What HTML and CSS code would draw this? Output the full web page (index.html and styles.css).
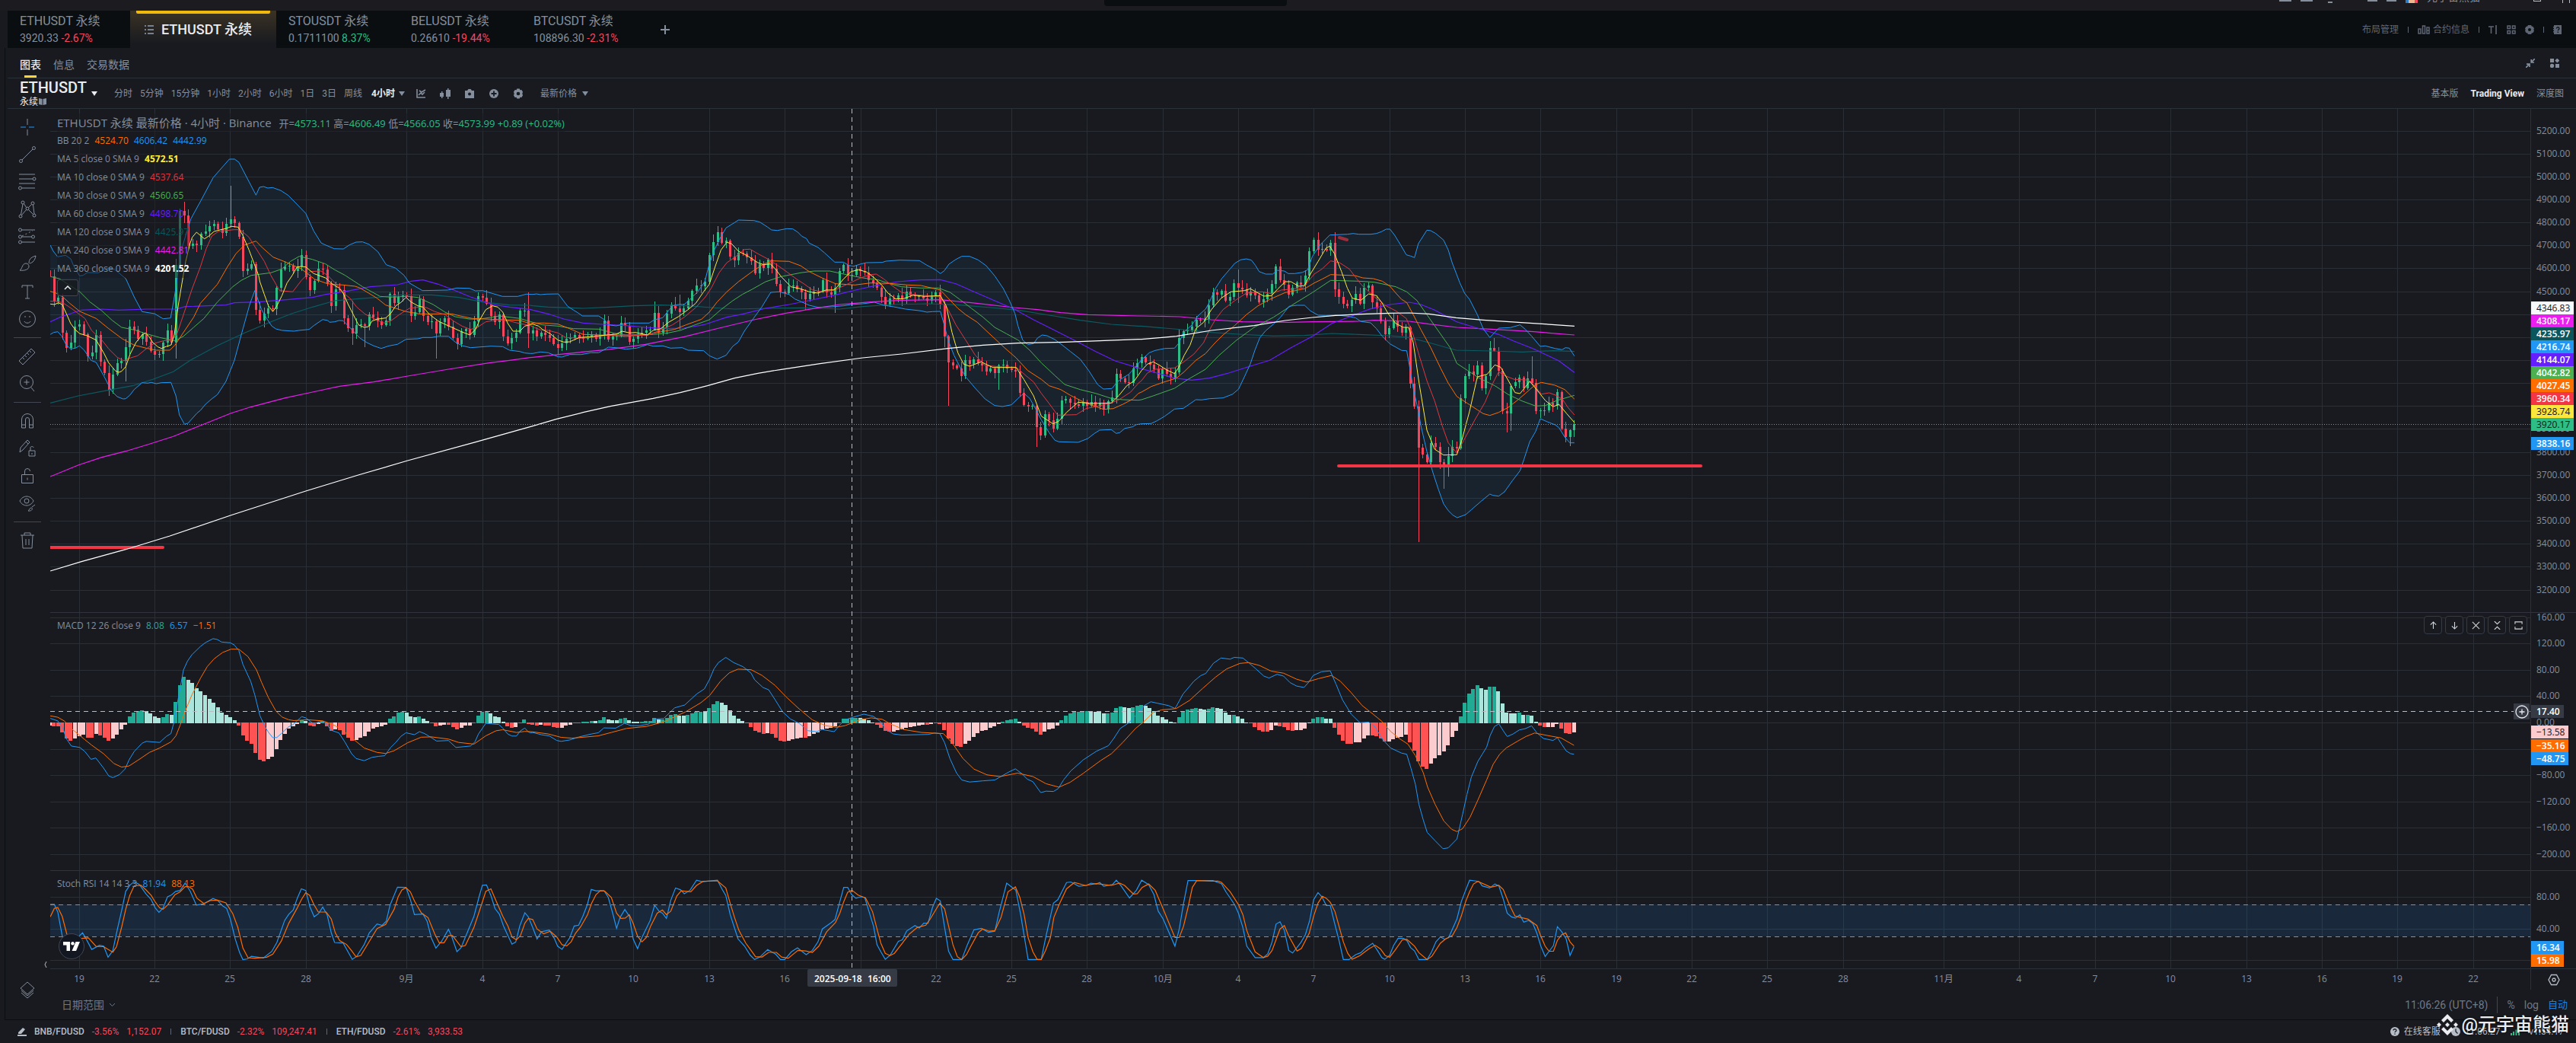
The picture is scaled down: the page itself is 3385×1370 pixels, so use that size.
FILE: index.html
```html
<!DOCTYPE html>
<html lang="zh-CN">
<head>
    <meta charset="UTF-8">
    <meta name="viewport" content="width=device-width, initial-scale=1.0">
    <title>ETHUSDT 永续</title>
    <link rel="stylesheet" href="styles.css">
</head>
<body>

    <header class="title-bar">
        <div class="title-search"><span>⌕</span><span>搜索</span></div>
        <div class="title-tools">
            <i class="stub"></i><i class="stub"></i><i class="stub round"></i>
            <i class="stub right"></i><i class="stub small"></i><i class="avatar"></i>
            <span class="user-name">元宇宙熊猫</span>
            <i class="win"></i><i class="win close"></i>
        </div>
    </header>

    <nav class="symbol-tabs">
        <a class="symbol-tab first" href="#"><span class="name">ETHUSDT 永续</span><span>3920.33 <b class="down">-2.67%</b></span></a>
        <a class="symbol-tab active" href="#">
            <svg width="14" height="14" viewBox="0 0 14 14"><path d="M1 2h2M1 7h2M1 12h2M5 2h8M5 7h8M5 12h8" stroke="#76808f" stroke-width="2"/></svg>
            <strong>ETHUSDT 永续</strong>
        </a>
        <a class="symbol-tab sto" href="#"><span class="name">STOUSDT 永续</span><span>0.1711100 <b class="up">8.37%</b></span></a>
        <a class="symbol-tab bel" href="#"><span class="name">BELUSDT 永续</span><span>0.26610 <b class="down">-19.44%</b></span></a>
        <a class="symbol-tab btc" href="#"><span class="name">BTCUSDT 永续</span><span>108896.30 <b class="down">-2.31%</b></span></a>
        <button class="add-tab" aria-label="添加"><svg width="14" height="14" viewBox="0 0 14 14"><path d="M7 1v12M1 7h12" stroke="#848e9c" stroke-width="2"/></svg></button>
        <div class="tab-tools">
            <button>布局管理</button>
            <i class="bar"></i>
            <button class="with-icon"><svg width="16" height="12" viewBox="0 0 16 12" fill="none" stroke="currentColor" stroke-width="1.5"><path d="M1 5h3v6H1zM6.500 1h3v10h-3zM12 3h3v8h-3zM12 7h3"/></svg>合约信息</button>
            <i class="bar"></i>
            <button aria-label="字体"><svg width="12" height="12" viewBox="0 0 12 12" fill="none" stroke="currentColor" stroke-width="1.600"><path d="M0 2h7M3.500 2v9M10 0v12"/></svg></button>
            <button aria-label="布局"><svg width="12" height="12" viewBox="0 0 12 12" fill="none" stroke="currentColor" stroke-width="1.500"><path d="M1 1h3.500v3.500H1zM7.500 1H11v3.500H7.500zM1 7.500h3.500V11H1zM7.500 7.500H11V11H7.500z"/></svg></button>
            <button aria-label="设置"><svg width="12" height="12" viewBox="0 0 12 12"><path fill-rule="evenodd" fill="currentColor" d="M4 0h4l.8 1.400L10.600 2 12 4.500 11.300 6 12 7.500 10.600 10l-1.800.6L8 12H4l-.8-1.400L1.400 10 0 7.500.7 6 0 4.500 1.400 2l1.800-.6zM6 4a2 2 0 1 0 0 4 2 2 0 0 0 0-4z"/></svg></button>
            <i class="bar"></i>
            <button aria-label="帮助"><svg width="12" height="12" viewBox="0 0 12 12"><path fill="currentColor" d="M1 0h10v12H1V9.500H0V8h1V6.500H0V5h1V3.500H0V2h1z"/><path d="M4.500 4.500c0-2.500 3.500-2.200 3.500 0C8 6 6.300 5.600 6.300 7.300M6.300 8.600v1.400" fill="none" stroke="#0b0e11" stroke-width="1.300"/></svg></button>
        </div>
    </nav>

    <main class="panel">
        <div class="panel-tabs">
            <button class="active">图表</button>
            <button>信息</button>
            <button>交易数据</button>
            <div class="panel-tools">
                <button aria-label="收起"><svg width="12" height="12" viewBox="0 0 12 12" fill="none" stroke="currentColor" stroke-width="1.700"><path d="M12 0 7.500 4.500M7.200 1v4H11M0 12l4.500-4.500M1 7.200h4V11"/></svg></button>
                <button aria-label="组件"><svg width="12" height="12" viewBox="0 0 12 12" fill="currentColor"><path d="M0 0h5v5H0zM7 7h5v5H7zM9.300-.4l3 3-3 3-3-3z"/><circle cx="2.500" cy="9.500" r="2.700"/></svg></button>
            </div>
        </div>

        <div class="chart-bar">
            <div class="symbol">
                <div class="symbol-name"><h1>ETHUSDT</h1><i class="caret white"></i></div>
                <div class="symbol-kind">永续<svg width="10" height="9" viewBox="0 0 10 9"><path fill="#848e9c" d="M0 0l4.500 1v8L0 8zM10 0 5.500 1v8L10 8z"/></svg></div>
            </div>
            <div class="intervals">
                <button>分时</button><button>5分钟</button><button>15分钟</button><button>1小时</button><button>2小时</button><button>6小时</button><button>1日</button><button>3日</button><button>周线</button>
                <button class="active">4小时<i class="caret"></i></button>
            </div>
            <div class="chart-tools">
                <button aria-label="指标"><svg width="14" height="14" viewBox="0 0 14 14" fill="none" stroke="currentColor" stroke-width="1.600"><path d="M2 1v11h11M4 9l3-3 2 2 3-3M5 3l3 2 5-3"/></svg></button>
                <button aria-label="K线"><svg width="14" height="14" viewBox="0 0 14 14" fill="currentColor"><path d="M0 6h2V4h1.500v2H5v5H3.500v2H2v-2H0zM8 2h2V0h1.500v2H14v9h-2.500v3H10v-3H8z"/></svg></button>
                <button aria-label="截图"><svg width="14" height="14" viewBox="0 0 14 14"><path fill="currentColor" fill-rule="evenodd" d="M1 3h3l1.500-2h3L10 3h3v10H1zM7 5.500a2 2 0 1 0 0 4 2 2 0 0 0 0-4z"/></svg></button>
                <button aria-label="添加"><svg width="14" height="14" viewBox="0 0 14 14"><circle cx="7" cy="7" r="6" fill="currentColor"/><path d="M7 3.500v7M3.500 7h7" stroke="#181a20" stroke-width="1.800"/></svg></button>
                <button aria-label="设置"><svg width="14" height="14" viewBox="0 0 12 12"><path fill-rule="evenodd" fill="currentColor" d="M4.500.5h3l.5 1.500 1.700-.3 1.500 2.300L10.500 6l.7 2-1.500 2.300L8 10l-.5 1.500h-3L4 10l-1.700.3L.8 8l.7-2L.8 4l1.500-2.300L4 2zM6 4a2 2 0 1 0 0 4 2 2 0 0 0 0-4z"/></svg></button>
                <button>最新价格<i class="caret big"></i></button>
            </div>
            <div class="views">
                <button>基本版</button><button class="active">Trading View</button><button>深度图</button>
            </div>
        </div>

        <div class="workspace">
            <aside class="draw-tools">
                <button aria-label="十字线"><svg viewBox="0 0 28 28"><path d="M14 3v8M14 17v8"/><path d="M5 14h7M16 14h7" stroke="#2196f3"/></svg></button>
                <button aria-label="趋势线"><svg viewBox="0 0 28 28"><circle cx="5.500" cy="22.500" r="2"/><circle cx="22.500" cy="5.500" r="2"/><path d="M7 21 21 7"/></svg></button>
                <button aria-label="斐波那契"><svg viewBox="0 0 28 28"><path d="M3 4h21M3 10h18M3 16h21M7 22h17"/><circle cx="23" cy="10" r="2"/><circle cx="4.500" cy="22" r="2"/></svg></button>
                <button aria-label="形态"><svg viewBox="0 0 28 28"><circle cx="5" cy="23" r="2"/><circle cx="8" cy="5" r="2"/><circle cx="21" cy="6" r="2"/><circle cx="23" cy="22" r="2"/><circle cx="14" cy="13" r="2"/><path d="M5.500 21 8 7M9.500 6.500l3 5M19.500 7.500 15.500 11.500M21.500 8l1.500 12M15.500 14.500l6 6M12.500 14.500l-6 7"/></svg></button>
                <button aria-label="预测"><svg viewBox="0 0 28 28"><path d="M6 5h18M6 14h14M6 21h18"/><path d="m7 13 14-7" stroke-dasharray="2 3"/><circle cx="4.500" cy="5" r="2"/><circle cx="4.500" cy="14" r="2"/><circle cx="21.500" cy="14" r="2"/><circle cx="4.500" cy="21" r="2"/></svg></button>
                <button aria-label="画笔"><svg viewBox="0 0 28 28"><path d="M4 22c3-1 3-9 8-9 3 0 4 2 4 4 0 4-6 6-12 5zM16 13c0-5 2-8 9-10-1 6-4 9-8 10"/></svg></button>
                <button aria-label="文字"><svg viewBox="0 0 28 28"><path d="M7 9V6h14v3M14 6v17M11 23h6"/></svg></button>
                <button aria-label="表情"><svg viewBox="0 0 28 28"><circle cx="14" cy="14" r="10.500"/><path d="M10 17c1 3 7 3 8 0M11 10v2M17 10v2"/></svg></button>
                <hr>
                <button aria-label="测量"><svg viewBox="0 0 28 28"><path d="m3 20 16-16 5 5L8 25zM8 16l2 2M11 13l2 2M14 10l2 2M17 7l2 2"/></svg></button>
                <button aria-label="放大"><svg viewBox="0 0 28 28"><circle cx="13" cy="12" r="8.500"/><path d="m19 19 4 5M13 8.500v7M9.500 12h7"/></svg></button>
                <hr>
                <button aria-label="磁铁"><svg viewBox="0 0 28 28"><path d="M6.500 23V12a7.500 7.500 0 0 1 15 0v11h-5V12a2.500 2.500 0 0 0-5 0v11zM6.500 19h5M16.500 19h5"/></svg></button>
                <button aria-label="绘图模式"><svg viewBox="0 0 28 28"><path d="m4 19 1-6L14 3l3 3-9 10zM12 5l3 3M16 17h8v7h-8zM18 17v-4c0-2 4-2 4 0M20 20v2"/></svg></button>
                <button aria-label="锁定"><svg viewBox="0 0 28 28"><path d="M6.500 12.500h15v11h-15zM10.500 12.500V8a3.500 3.500 0 0 1 7 0M14 16.500v3"/></svg></button>
                <button aria-label="隐藏"><svg viewBox="0 0 28 28"><path d="M4 11c4-8 14-8 18 0-4 8-14 8-18 0z"/><circle cx="13" cy="11" r="3"/><path d="M15 24c1 0 2-4 4-4 3 0 1 5-4 4zM20 19l4-3"/></svg></button>
                <hr>
                <button aria-label="删除"><svg viewBox="0 0 28 28"><path d="M5 7h18M10 7V4h8v3M7 7l1 17h12l1-17M12 12v8M16 12v8"/></svg></button>
                <button class="layers" aria-label="图层"><svg viewBox="0 0 28 28"><path d="m14 3 9 8-9 8-9-8zM6 14l8 7 8-7M6 17l8 7 8-7"/></svg></button>
            </aside>

            <section class="chart">
                <div class="plot">
                    <svg id="plot" class="plot-svg"></svg>

                    <div class="legend">
                        <div class="legend-title">ETHUSDT 永续 最新价格 · 4小时 · Binance <span class="ohlc">开=<b>4573.11</b> 高=<b>4606.49</b> 低=<b>4566.05</b> 收=<b>4573.99</b> <b>+0.89 (+0.02%)</b></span></div>
                        <div>BB 20 2 <b class="orange">4524.70</b> <b class="blue">4606.42</b> <b class="blue">4442.99</b></div>
                        <div>MA 5 close 0 SMA 9 <b class="yellow strong">4572.51</b></div>
                        <div>MA 10 close 0 SMA 9 <b class="red">4537.64</b></div>
                        <div>MA 30 close 0 SMA 9 <b class="green">4560.65</b></div>
                        <div>MA 60 close 0 SMA 9 <b class="purple">4498.70</b></div>
                        <div>MA 120 close 0 SMA 9 <b class="teal">4425.97</b></div>
                        <div>MA 240 close 0 SMA 9 <b class="magenta">4442.81</b></div>
                        <div>MA 360 close 0 SMA 9 <b class="white strong">4201.52</b></div>
                        <button class="collapse" aria-label="收起图例"><svg width="10" height="6" viewBox="0 0 10 6"><path d="m1 5 4-4 4 4" fill="none" stroke="#eaecef" stroke-width="1.500"/></svg></button>
                    </div>
                    <div class="legend macd">MACD 12 26 close 9 <b class="mint">8.08</b> <b class="blue">6.57</b> <b class="orange">−1.51</b></div>
                    <div class="legend stoch">Stoch RSI 14 14 3 3 <b class="blue">81.94</b> <b class="orange">88.13</b></div>

                    <div class="pane-buttons">
                        <button aria-label="上移"><svg viewBox="0 0 12 12"><path d="M6 11V1M2 5l4-4 4 4"/></svg></button>
                        <button aria-label="下移"><svg viewBox="0 0 12 12"><path d="M6 1v10M2 7l4 4 4-4"/></svg></button>
                        <button aria-label="删除"><svg viewBox="0 0 12 12"><path d="m1 1 10 10M11 1 1 11"/></svg></button>
                        <button aria-label="折叠"><svg viewBox="0 0 12 12"><path d="m2 0 4 4 4-4M2 12l4-4 4 4"/></svg></button>
                        <button aria-label="最大化"><svg viewBox="0 0 12 12"><path d="M1 4V1h10v3M1 8v3h10V8"/></svg></button>
                    </div>
                    <button class="cross-add" aria-label="添加提醒"><svg width="18" height="18" viewBox="0 0 18 18" fill="none" stroke="#eaecef" stroke-width="1.300"><circle cx="9" cy="9" r="8"/><path d="M9 5.500v7M5.500 9h7"/></svg></button>
                    <button class="side-toggle" aria-label="展开"><svg width="4" height="8" viewBox="0 0 4 8"><path d="M3 0 1 4l2 4" fill="none" stroke="#b7bdc6"/></svg></button>
                    <a class="tv-logo" href="#" aria-label="TradingView"><svg width="22" height="14" viewBox="0 0 22 14" fill="#fff"><path d="M0 1h9v12H4.500V5.500H0zM16.500 1H22l-5 12h-5.500z"/><circle cx="12.500" cy="3.300" r="2.200"/></svg></a>
                </div>
                <svg id="price-axis" class="price-axis"></svg>
                <svg id="time-axis" class="time-axis"></svg>
                <button class="axis-settings" aria-label="坐标设置"><svg width="16" height="16" viewBox="0 0 16 16" fill="none" stroke="#b7bdc6" stroke-width="1.300"><path d="M4.500 1.500h7L15 8l-3.500 6.500h-7L1 8z"/><circle cx="8" cy="8" r="2"/></svg></button>
                <div class="range-bar">
                    <button>日期范围<svg width="9" height="6" viewBox="0 0 9 6"><path d="m1 1 3.500 3.500L8 1" fill="none" stroke="currentColor"/></svg></button>
                    <div class="range-right">
                        <button>11:06:26 (UTC+8)</button><i></i><button>%</button><button>log</button><button class="auto">自动</button>
                    </div>
                </div>
            </section>
        </div>
    </main>

    <footer class="ticker">
        <svg width="12" height="12" viewBox="0 0 12 12" fill="#b7bdc6"><path d="M1 7l6-6 3 2-5 6H1zM0 10h12v2H0z"/></svg>
        <a href="#">BNB/FDUSD <b>-3.56%</b> <b>1,152.07</b></a><i></i>
        <a href="#">BTC/FDUSD <b>-2.32%</b> <b>109,247.41</b></a><i></i>
        <a href="#">ETH/FDUSD <b>-2.61%</b> <b>3,933.53</b></a>
        <div class="status">
            <svg width="12" height="12" viewBox="0 0 12 12"><circle cx="6" cy="6" r="6" fill="#b7bdc6"/><path d="M4 4.500c0-2.500 4-2.200 4 0C8 6 6 5.600 6 7.300M6 8.400v1.400" fill="none" stroke="#181a20" stroke-width="1.300"/></svg>
            <span class="help">在线客服</span>
            <svg width="12" height="12" viewBox="0 0 12 12"><circle cx="6" cy="6" r="6" fill="#b7bdc6"/><path d="M6 2.500V6l2.500 2.500" fill="none" stroke="#181a20" stroke-width="1.300"/></svg>
            <span class="clock">11:06:27</span>
            <svg width="12" height="10" viewBox="0 0 12 10" fill="#2ebd85"><path d="M0 7h2v3H0zM3 5h2v5H3zM6.500 2.500h2V10h-2zM10 0h2v10h-2z"/></svg>
            <span class="version">v1.54.17</span>
        </div>
        <div class="watermark">
            <svg width="28" height="28" viewBox="0 0 28 28" fill="#eaecef"><path d="M14 0 6 8l3 3 5-5 5 5 3-3zM3 11l3 3-3 3-3-3zM14 11l3 3-3 3-3-3zM25 11l3 3-3 3-3-3zM6 20l8 8 8-8-3-3-5 5-5-5z"/></svg>
            <span>@元宇宙熊猫</span>
        </div>
    </footer>

    <script src="chart.js"></script>
</body>
</html>
```

FILE: styles.css
```css
:root {
    --bg: #181a20;
    --dark: #0b0e11;
    --line: #2b3139;
    --muted: #848e9c;
    --dim: #5e6673;
    --text: #eaecef;
    --up: #2ebd85;
    --down: #f6465d;
    --blue: #2196f3;
    --orange: #ff6d00;
}

* {
    box-sizing: border-box;
}

body {
    display: flex;
    flex-direction: column;
    min-height: 100vh;
    margin: 0;
    background: var(--bg);
    color: var(--muted);
    font-family: Roboto, "Noto Sans CJK SC", sans-serif;
    font-size: 12px;
    line-height: 16px;
}

button {
    display: flex;
    align-items: center;
    padding: 0;
    border: none;
    background: none;
    color: inherit;
    font: inherit;
    cursor: pointer;
}

a {
    color: inherit;
    text-decoration: none;
}

b {
    font-weight: 400;
}

svg {
    flex: none;
}

.up {
    color: var(--up);
}

.down {
    color: var(--down);
}

/* window title strip */
.title-bar {
    position: relative;
    display: flex;
    justify-content: center;
    height: 14px;
    background: #1b1b20;
}

.title-search {
    display: flex;
    align-items: flex-end;
    gap: 8px;
    width: 240px;
    height: 8px;
    margin-right: 243px;
    padding: 0 12px 6px;
    overflow: hidden;
    border-radius: 0 0 4px 4px;
    background: var(--dark);
}

.title-search span {
    clip-path: inset(12px 0 0 0);
}

.title-tools {
    position: absolute;
    top: 0;
    right: 8px;
    display: flex;
    align-items: flex-end;
    gap: 12px;
    height: 4px;
    overflow: hidden;
}

.stub {
    width: 16px;
    height: 2px;
    margin-bottom: 2px;
    background: var(--muted);
}

.stub.round {
    width: 6px;
    margin: 0 34px 0 8px;
}

.stub.right,
.stub.small {
    width: 13px;
}

.avatar {
    width: 16px;
    height: 4px;
    background: linear-gradient(90deg, #2a7fc9 25%, #f0b78f 25% 75%, #f6465d 75%);
}

.user-name {
    font-size: 14px;
    line-height: 16px;
}

.win {
    width: 10px;
    height: 10px;
    margin: 0 16px 2px 58px;
    border: 1px solid #b7bdc6;
}

.win.close {
    margin: 0;
    border-width: 0 1px;
}

/* symbol tabs */
.symbol-tabs {
    display: flex;
    height: 49px;
    margin-left: 10px;
    background: var(--dark);
}

.symbol-tab {
    display: flex;
    flex-direction: column;
    justify-content: center;
    gap: 4px;
    width: 161px;
    padding-left: 16px;
    font-size: 14px;
    line-height: 18px;
    white-space: nowrap;
}

.symbol-tab .name {
    font-size: 16px;
}

.symbol-tab.active {
    flex-direction: row;
    align-items: center;
    justify-content: flex-start;
    gap: 9px;
    width: 192px;
    padding-left: 18px;
    background: linear-gradient(180deg, #3a3224, var(--bg) 90%);
    color: var(--text);
    font-size: 18px;
    position: relative;
}

.symbol-tab.active::before {
    content: "";
    position: absolute;
    top: 0;
    left: 8px;
    right: 8px;
    height: 4px;
    border-radius: 0 0 2px 2px;
    background: #f0b90b;
}

.symbol-tab.active strong {
    font-weight: 500;
}

.add-tab {
    justify-content: center;
    width: 56px;
}

.tab-tools {
    display: flex;
    align-items: center;
    gap: 12px;
    margin-left: auto;
    padding-right: 18px;
    color: var(--dim);
}

.tab-tools .with-icon svg {
    margin-right: 4px;
}

.bar {
    width: 1px;
    height: 8px;
    background: var(--dim);
}

/* panel */
.panel {
    flex: 1;
    display: flex;
    flex-direction: column;
    margin-left: 6px;
    padding-left: 3px;
    border-left: 1px solid var(--dark);
    border-bottom: 1px solid var(--dark);
}

.panel-tabs {
    display: flex;
    gap: 16px;
    height: 40px;
    padding: 0 22px 0 16px;
    border-bottom: 1px solid var(--line);
    font-size: 14px;
}

.panel-tabs > button {
    position: relative;
    padding-top: 4px;
}

.panel-tabs .active {
    color: var(--text);
    font-weight: 500;
}

.panel-tabs > .active::after {
    content: "";
    position: absolute;
    bottom: 0;
    left: 6px;
    width: 16px;
    height: 3px;
    background: #fcd535;
}

.panel-tools {
    display: flex;
    gap: 20px;
    margin-left: auto;
}

.chart-bar {
    display: flex;
    align-items: center;
    height: 40px;
    padding: 0 16px;
    border-bottom: 1px solid var(--line);
}

.symbol {
    width: 124px;
    color: var(--text);
}

.symbol-name {
    display: flex;
    align-items: flex-end;
    gap: 6px;
}

.symbol-name h1 {
    margin: 0;
    font-size: 20px;
    line-height: 22px;
    font-weight: 500;
}

.symbol-kind {
    display: flex;
    align-items: center;
    gap: 1px;
}

.caret {
    border: 4px solid transparent;
    border-top: 6px solid var(--muted);
    border-bottom: 0;
    margin-left: 5px;
}

.caret.white {
    margin: 0;
    border-top-color: var(--text);
}

.caret.big {
    margin-left: 7px;
}

.intervals,
.chart-tools,
.views {
    display: flex;
    align-items: center;
    gap: 10px;
}

.intervals .active,
.views .active {
    color: var(--text);
    font-weight: 700;
}

.intervals .active {
    margin-left: 2px;
}

.chart-tools {
    gap: 18px;
    margin-left: 14px;
}

.chart-tools button:last-child {
    margin-left: 4px;
}

.views {
    gap: 16px;
    margin-left: auto;
}

/* drawing tools */
.workspace {
    flex: 1;
    display: flex;
}

.draw-tools {
    display: flex;
    flex-direction: column;
    align-items: center;
    width: 56px;
    padding: 6px 4px 20px 0;
}

.draw-tools button {
    height: 36px;
}

.draw-tools svg {
    width: 28px;
    height: 28px;
    fill: none;
    stroke: var(--muted);
}

.draw-tools hr {
    width: 36px;
    margin: 6px 0;
    border: none;
    border-top: 1px solid #434651;
}

.draw-tools .layers {
    margin-top: auto;
}

/* chart */
.chart {
    flex: 1;
    display: grid;
    grid-template-columns: minmax(0, 1fr) 60px;
    grid-template-rows: 1130px 27px 1fr;
}

.plot {
    position: relative;
    border-bottom: 1px solid var(--line);
}

.plot-svg {
    display: block;
    width: 100%;
    height: 100%;
}

.price-axis {
    width: 60px;
    height: 1130px;
    border-left: 1px solid var(--line);
    border-bottom: 1px solid var(--line);
}

.time-axis {
    width: 100%;
    height: 27px;
}

svg text,
.legend {
    font-family: "Open Sans", "Noto Sans CJK SC", sans-serif;
    font-size: 12px;
}

.axis-text {
    fill: var(--muted);
}

.axis-settings {
    justify-content: center;
    border-left: 1px solid var(--line);
}

.legend {
    position: absolute;
    top: 6px;
    left: 9px;
    line-height: 24px;
    white-space: nowrap;
}

.legend > div {
    width: max-content;
    height: 24px;
    background: rgba(24, 26, 32, 0.5);
}

.legend b {
    margin-left: 4px;
}

.legend .legend-title {
    font-size: 15px;
}

.ohlc {
    margin-left: 6px;
    font-size: 13px;
}

.ohlc b {
    margin: 0;
    color: var(--up);
}

.legend .strong {
    font-weight: 700;
}

.orange {
    color: var(--orange);
}

.blue {
    color: var(--blue);
}

.yellow {
    color: #ffeb3b;
}

.red {
    color: #e0363f;
}

.green {
    color: #4caf50;
}

.purple {
    color: #651fff;
}

.teal {
    color: #0b565c;
}

.magenta {
    color: #e91eef;
}

.white {
    color: #fff;
}

.mint {
    color: #22ab94;
}

.legend.macd {
    top: 667px;
}

.legend.stoch {
    top: 1006px;
}

.collapse {
    justify-content: center;
    width: 28px;
    height: 22px;
    margin-top: 2px;
    border: 1px solid #434651;
    border-radius: 3px;
    background: rgba(24, 26, 32, 0.8);
}

.pane-buttons {
    position: absolute;
    top: 666px;
    right: 4px;
    display: flex;
    gap: 4px;
}

.pane-buttons button {
    justify-content: center;
    width: 24px;
    height: 24px;
    border: 1px solid #363a45;
    border-radius: 4px;
    background: var(--bg);
}

.pane-buttons svg {
    width: 11px;
    height: 11px;
    fill: none;
    stroke: #d1d4dc;
    stroke-width: 1.2;
}

.cross-add {
    position: absolute;
    top: 781px;
    right: 1px;
    justify-content: center;
    width: 21px;
    height: 21px;
    background: #363a45;
}

.side-toggle {
    position: absolute;
    left: -8px;
    bottom: 1px;
}

.tv-logo {
    position: absolute;
    left: 11px;
    bottom: 12px;
    display: flex;
    align-items: center;
    justify-content: center;
    width: 34px;
    height: 34px;
    border: 1px solid #434651;
    border-radius: 50%;
    background: #131722;
}

.range-bar {
    grid-column: 1 / -1;
    display: flex;
    align-items: center;
    justify-content: space-between;
    padding: 0 11px 0 15px;
    color: #6f7885;
    font-size: 14px;
}

.range-bar button {
    gap: 6px;
}

.range-right {
    display: flex;
    align-items: center;
    gap: 12px;
}

.range-right i {
    width: 1px;
    height: 22px;
    background: #434651;
}

.range-right .auto {
    color: #1e80e0;
    font-size: 13px;
}

/* footer */
.ticker {
    position: relative;
    display: flex;
    align-items: center;
    height: 30px;
    padding: 0 16px 0 23px;
    color: #b7bdc6;
}

.ticker > svg {
    margin-right: 10px;
}

.ticker > a {
    font-weight: 500;
    white-space: nowrap;
}

.ticker > a b {
    margin-left: 7px;
    color: var(--down);
    font-weight: 400;
}

.ticker > i {
    width: 1px;
    height: 8px;
    margin: 0 12px;
    background: var(--dim);
}

.status {
    display: flex;
    align-items: center;
    gap: 6px;
    margin-left: auto;
}

.status .help,
.status .clock {
    margin-right: 8px;
}

.version {
    margin-left: 6px;
}

.watermark {
    position: absolute;
    right: 9px;
    bottom: 8px;
    display: flex;
    align-items: center;
    gap: 4px;
    color: var(--text);
    font-size: 24px;
    line-height: 32px;
    font-weight: 500;
    text-shadow: 0 0 3px #000;
}
```

FILE: chart.js
```js
const NS = 'http://www.w3.org/2000/svg';

// where the plot sits on the page, and the bar spacing
const LEFT = 66, TOP = 143, BAR = 5.517, FIRST = -7;
const barX = k => 104 + k * BAR;
const priceY = p => 171.5 + (5200 - p) * 0.3015;
const macdY = v => 949 - v * 0.865;
const stochY = v => 1261 - v * 1.035;

const COLORS = {
    up: '#2ebd85', down: '#f6465d', grid: '#2a2f36', blue: '#2196f3', orange: '#ff6d00',
    yellow: '#ffeb3b', red: '#e0363f', green: '#4caf50', purple: '#651fff', teal: '#0b5c62', magenta: '#e91eef'
};

// sample blocks: origin x, origin y, units per pixel x, units per pixel y
const BLOCKS = {
    A: [0, 0, 1.742, 3],
    B: [0, 350, 2.24, 3],
    C: [700, 250, 1.96, 3],
    D: [1500, 250, 1.96, 3],
    E: [0, 800, 2.24, 2.751],
    F: [700, 780, 1.742, 2.658],
    G: [1500, 780, 1.742, 2.658]
};

const SERIES = {
    upper: [
        'A', '115,966 122,990 132,1012 150,1006 162,1020 168,1045 182,1087 190,1085 200,1074 225,1075 240,1062 250,1055 262,1062 272,1075 288,1098',
        'B', '395,120 418,178 455,186 480,206 502,203 512,130',
        'A', '403,1130 414,990 437,862 460,790 488,700 525,627 537,627 547,640 586,769 594,738 603,735 613,741 624,739 643,751 660,770 700,841 718,910 735,957 742,963 765,980 786,981 800,965 815,954 830,953 845,963 865,992 884,1043 905,1056 925,1085 937,1115 967,1145 1025,1143 1045,1135 1075,1136 1088,1146 1105,1145 1150,1168 1185,1168 1205,1159',
        'C', '0,410 10,408 20,411 35,409 66,408 90,457 105,472 117,483 128,495 170,495 185,510 195,530 215,534 245,523 300,523 312,511 335,502 345,483 360,455 378,449 390,450 405,430 425,400 443,360 455,290 468,235 480,195 498,148 520,127 530,117 570,119 585,125 605,145 615,156 630,158 655,151 670,152 683,165 693,181 705,190 712,208 735,225 752,247 778,283 800,283 815,296 827,299 845,290 860,285 900,284 910,279 945,275 996,277 1015,295 1030,307 1040,316 1050,328 1060,317 1072,291 1090,272 1105,260 1125,260 1147,274 1168,297 1190,337 1212,387 1228,435 1242,485 1250,535 1262,590 1275,608 1290,604 1300,582 1312,570 1325,573 1345,588 1360,605 1385,635 1410,665 1432,710 1455,765 1470,783 1492,781 1505,755 1520,739 1535,725 1547,705',
        'D', '0,668 20,640 35,631 60,623 85,622 97,600 108,560 130,530 145,495 165,468 175,440 190,388 207,347 228,310 240,288 255,274 270,270 283,275 293,295 303,320 320,330 338,330 350,315 368,318 378,328 395,328 415,323 428,313 440,260 460,215 485,176 530,173 545,170 560,173 590,173 605,170 618,163 630,153 640,153 652,177 668,217 682,254 693,259 703,265 713,210 735,157 745,159 758,170 778,196 790,235 800,285 820,365 832,405 845,430 865,490 880,545 897,580 920,543 950,541 975,530 988,547 1005,575 1027,615 1040,613 1065,623 1083,628 1092,620 1102,622 1115,653'
    ],
    lower: [
        'B', '148,268 158,260 170,257 182,275 195,310 208,325 222,322 234,313 248,330 268,370 283,378 305,430 328,490 345,513 362,522 370,521 382,508 395,485 418,458 435,460 445,457 460,462 475,458 503,457 518,510 528,585 543,622 553,618 580,578 590,567 605,543 625,520 640,505 665,453 678,410 690,370 712,260 735,150 750,95 770,170 785,205 800,235 812,246 830,252 865,255 880,252 910,248 925,232 950,209 965,213 970,220 985,218 998,213 1010,214 1035,248 1060,283 1080,300 1100,313 1122,323 1145,313 1170,307 1195,287 1230,285 1245,280 1270,280 1290,275 1320,275 1340,298 1360,312 1385,320 1445,314 1480,316 1500,330 1530,335 1545,341 1560,343',
        'C', '0,643 20,637 40,640 65,656 75,657 95,647 125,647 150,640 170,640 195,618 215,620 240,626 268,622 295,608 310,614 335,613 355,622 385,620 400,630 440,632 455,652 475,665 498,650 515,615 530,597 545,555 565,512 590,460 613,402 635,400 660,410 675,428 693,440 712,453 735,461 770,459 800,455 820,450 850,447 880,441 905,453 930,459 960,468 1000,475 1015,480 1030,478 1050,477 1060,530 1070,590 1085,650 1100,695 1115,735 1140,780 1165,822 1190,848 1210,852 1233,845 1250,820 1265,800 1280,820 1295,860 1310,905 1330,955 1345,985 1355,991 1405,993 1430,978 1445,960 1460,945 1490,943 1503,958 1512,955 1525,938 1545,932 1555,923',
        'D', '0,920 25,919 40,908 60,890 85,862 108,859 140,825 155,826 175,821 210,818 235,803 250,783 265,735 280,685 292,630 305,580 320,553 340,527 358,500 380,457 400,453 420,453 435,475 455,492 475,493 500,491 535,497 552,503 565,517 590,522 605,545 620,575 640,605 655,618 670,631 683,632 690,690 700,780 713,870 720,930 735,1030 750,1110 765,1180 778,1235 790,1262 802,1280 813,1290 835,1278 850,1258 875,1225 897,1197 905,1202 920,1205 935,1188 955,1145 975,1105 985,1060 1000,990 1015,950 1027,900 1045,912 1065,924 1075,935 1090,972 1103,995 1115,995'
    ],
    ma360: [
        'B', '148,1200 240,1163 370,1115 500,1062 680,980 900,885 1060,820 1200,765 1400,692 1560,632',
        'C', '0,929 60,902 130,875 200,851 310,820 380,797 450,770 520,740 580,721 640,706 740,683 850,660 950,645 1070,623 1160,610 1250,602 1370,598 1460,593 1560,587',
        'D', '0,587 90,575 180,552 290,533 370,513 440,501 500,493 580,487 640,484 690,483 740,487 810,502 880,511 1000,523 1115,535'
    ],
    ma240: [
        'B', '148,828 230,783 300,752 370,728 440,700 510,670 580,632 680,578 740,553 840,518 920,495 1000,472 1100,455 1200,432 1320,405 1440,380 1500,370 1560,359',
        'C', '0,658 90,643 190,628 290,607 390,577 480,543 570,510 650,485 720,467 790,450 870,440 950,433 1050,431 1130,443 1240,462 1300,470 1360,482 1430,490 1560,495',
        'D', '0,495 100,498 180,510 260,518 380,520 440,518 560,516 600,512 690,516 740,527 812,540 900,547 1010,557 1115,570'
    ],
    ma120: [
        'B', '148,538 230,510 320,487 390,470 450,445 510,415 560,370 640,312 720,262 800,217 860,185 920,160 985,135 1050,128 1110,122 1180,112 1270,112 1350,122 1420,140 1500,152 1560,153',
        'C', '0,455 40,460 130,465 200,460 260,455 330,452 400,455 460,462 520,468 600,465 700,463 790,468 850,458 930,450 1020,447 1100,452 1180,462 1250,472 1330,492 1410,512 1490,528 1560,535',
        'D', '0,535 60,543 130,552 180,560 250,567 340,574 420,572 490,564 560,568 640,573 690,580 740,600 810,630 900,633 980,637 1060,632 1115,635'
    ],
    ma60: [
        'B', '148,218 180,198 240,172 300,168 350,172 430,168 520,168 545,158 665,152 690,143 760,140 850,130 920,122 960,110 1010,100 1090,80 1170,72 1210,58 1245,53 1290,70 1330,90 1385,120 1450,150 1500,160 1560,169',
        'C', '0,472 40,487 80,507 130,523 180,528 240,533 290,540 340,545 390,543 440,530 500,500 540,488 600,465 660,450 720,432 780,412 840,390 890,373 940,360 1000,353 1050,352 1090,368 1130,395 1190,435 1240,468 1290,510 1340,548 1400,595 1450,635 1500,672 1560,700',
        'D', '0,703 40,720 85,740 130,748 175,740 220,722 280,693 330,670 385,620 440,575 490,525 550,490 590,467 640,450 690,441 720,450 755,472 812,518 870,545 920,568 960,595 1010,625 1075,672 1115,718'
    ],
    ma30: [
        'B', '148,40 175,48 235,100 265,140 300,175 330,212 358,240 395,250 430,265 470,280 515,293 540,275 570,240 600,205 640,140 685,80 710,55',
        'A', '575,1085 620,1075 645,1060 665,1030 685,1010 715,1022 745,1040 765,1062 790,1085 830,1130 870,1168',
        'B', '1150,121 1200,118 1230,122 1275,150 1310,180 1340,198 1380,207 1410,208 1470,195 1530,205 1560,217',
        'C', '0,520 25,530 65,535 105,545 170,547 210,563 240,570 310,568 345,563 380,552 415,532 455,510 485,470 515,435 540,410 565,390 600,360 640,340 690,325 725,318 765,318 810,333 850,345 890,353 920,368 950,380 1000,385 1045,385 1075,402 1100,430 1130,465 1160,500 1190,540 1220,565 1250,590 1280,630 1310,680 1345,730 1370,765 1410,785 1450,800 1490,820 1520,825 1560,827',
        'D', '0,825 30,810 85,780 120,745 165,705 200,650 245,590 290,540 340,500 390,450 440,403 487,355 560,358 600,362 655,380 683,400 710,435 735,490 765,555 795,620 812,682 840,710 870,740 910,770 945,805 980,830 1015,850 1040,848 1070,828 1115,808'
    ],
    basis: [
        'B', '148,98 165,105 185,120 205,145 235,177 283,205 320,245 360,285 395,310 430,322 460,330 500,330 515,310 545,250 570,200 590,145 640,70',
        'A', '521,1050 540,1000 560,965 586,950 600,975 625,1013 650,1030 690,1060 720,1100 750,1118 775,1122',
        'B', '1010,73 1045,78 1060,85 1085,105 1110,125 1135,152 1165,165 1195,178 1235,187 1330,187 1355,195 1390,205 1480,210 1530,212 1560,225',
        'C', '0,523 30,523 65,527 95,545 130,568 175,570 240,575 290,570 320,560 365,548 395,530 435,508 455,480 475,440 500,400 530,360 570,315 595,290 620,278 660,280 690,297 712,320 745,345 780,368 830,373 870,365 920,367 965,373 1000,375 1050,393 1070,425 1095,465 1115,490 1145,520 1180,570 1215,620 1245,660 1275,710 1310,745 1330,770 1360,785 1385,808 1420,835 1450,852 1470,863 1495,860 1520,843 1545,823 1560,800',
        'D', '0,795 25,773 55,757 90,740 110,715 140,670 165,643 190,600 210,570 240,533 270,490 300,455 330,430 370,403 420,388 445,365 465,350 487,332 550,336 570,345 597,348 620,358 640,378 655,405 670,430 683,442 700,490 720,550 745,620 770,700 790,760 812,812 840,840 865,865 880,880 897,887 920,875 945,855 970,825 1000,785 1015,765 1030,757 1065,768 1090,785 1115,823'
    ],
    ma10: [
        'B', '148,137 165,137 185,143 210,165 235,190 250,205 270,253 300,290 320,325 345,358 365,372 380,362 405,352 430,325 455,303 480,293 505,290 520,270 540,190 565,90',
        'A', '459,1050 472,980 485,930 500,912 535,905 550,905 570,935 590,990 605,1030 620,1085 640,1145 670,1150 690,1105 710,1070 735,1068 750,1085 770,1120 790,1160',
        'B', '1030,125 1050,160 1075,188 1100,205 1130,223 1150,215 1175,190 1205,165 1235,160 1255,162 1280,178 1310,190 1335,215 1360,235 1385,248 1405,240 1430,218 1465,210 1500,215 1530,225 1560,232',
        'C', '0,538 20,550 40,552 65,562 85,580 120,583 150,580 200,570 240,570 295,572 330,550 360,530 390,500 420,462 445,420 460,385 480,325 500,285 520,265 545,233 560,232 580,250 605,270 630,295 655,322 680,350 700,370 720,392 745,400 778,393 810,370 845,345 870,332 885,330 905,350 925,375 950,402 975,410 1000,413 1050,420 1070,470 1090,530 1115,590 1140,650 1165,690 1200,695 1245,697 1270,730 1290,755 1310,800 1330,840 1352,886 1400,884 1425,860 1450,852 1490,838 1510,825 1540,795 1560,760',
        'D', '0,750 15,720 35,705 85,700 110,675 135,645 160,600 175,550 190,510 210,470 240,435 270,405 310,400 335,407 360,393 395,388 415,385 445,330 465,310 487,278 510,285 535,310 565,370 600,420 630,455 655,475 682,505 700,570 715,650 735,750 755,830 775,930 790,995 812,1035 830,985 860,900 885,835 905,760 920,715 935,730 960,745 998,748 1015,775 1030,803 1050,798 1068,808 1085,825 1098,855 1115,885'
    ],
    ma5: [
        'B', '148,148 160,150 172,143 183,150 195,185 208,225 222,250 235,265 255,272 283,290 305,340 320,380 340,412 350,417 358,413 370,395 383,345 400,300 418,270 428,262 438,275 450,300 465,317 475,323 490,315 503,310 513,270 525,150 540,30',
        'A', '425,1030 435,960 440,935 450,915 460,930 468,941 478,930 490,912 505,905 518,900 530,892 545,895 555,925 570,985 582,1040 592,1085',
        'B', '765,60 778,110 790,155 803,178 815,155 830,115 845,65',
        'A', '669,1085 680,1052 690,1050 700,1052 718,1078 745,1095 760,1118',
        'B', '985,75 998,85 1010,105 1025,150 1040,190 1055,230 1072,240 1085,237 1095,215 1110,208 1135,203 1150,185 1165,155 1180,142 1195,122 1210,140 1230,155 1245,160 1265,190 1290,215 1310,228 1330,240 1360,258 1383,270 1400,248 1412,210 1430,170 1450,155 1465,160 1480,180 1495,225 1510,255 1530,255 1545,235 1560,230',
        'C', '0,527 15,535 25,548 45,565 65,590 80,598 95,597 120,580 150,577 190,570 215,567 230,555 250,562 265,560 295,570 310,552 330,545 350,520 375,498 400,470 420,445 440,400 455,370 470,300 485,235 500,205 512,210 530,240 555,260 580,285 595,293 612,290 625,310 640,340 665,380 690,388 712,400 735,405 755,393 778,392 800,350 820,320 840,313 860,322 880,345 900,375 915,405 935,428 955,427 980,413 1010,418 1050,415 1065,455 1080,560 1095,640 1110,685 1125,693 1155,676 1185,698 1245,698 1265,745 1290,810 1310,890 1340,920 1355,910 1375,875 1405,835 1440,840 1490,838 1510,808 1530,770 1550,750',
        'D', '0,710 15,685 30,676 45,688 65,708 85,722 95,700 110,650 125,610 140,545 160,520 180,470 205,425 230,400 265,395 280,388 295,400 315,417 335,415 350,390 370,360 385,360 405,378 420,375 435,330 455,280 475,228 485,220 497,250 515,320 530,385 543,425 565,433 585,408 605,415 618,440 635,485 655,525 675,540 688,540 700,600 715,760 735,945 755,1020 778,1043 812,1042 825,985 845,870 865,735 890,725 910,688 925,697 945,750 962,797 975,801 1000,753 1015,780 1040,828 1060,853 1075,843 1095,880 1115,915'
    ],
    macd: [
        'E', '148,395 170,404 185,430 195,468 210,495 235,500 250,515 268,543 282,538 305,575 320,603 332,609 352,598 368,578 380,545 395,515 418,485 430,478 470,482 490,460 503,450 513,405 525,320 540,220 552,188 565,165 590,135 605,121 627,107 640,110 652,119 678,122 690,130 703,150 715,200 738,262 750,310 765,385 780,425 790,445 803,465 815,464 830,448 848,427 865,415 878,400 888,389 900,393 915,408 925,414 945,405 958,412 975,438 998,448 1015,480 1035,523 1048,540 1072,548 1095,536 1115,532 1132,530 1150,500 1165,482 1180,460 1195,447 1220,454 1235,443 1250,450 1270,465 1285,477 1320,475 1342,500 1385,495 1398,480 1408,452 1430,413 1468,417 1480,430 1495,452 1507,459 1520,459 1532,440 1545,430 1555,444 1562,447',
        'F', '0,484 20,492 38,496 55,512 65,515 85,510 105,500 135,489 150,485 163,468 190,469 210,452 225,460 245,460 265,455 280,437 300,435 325,398 348,388 375,350 393,332 405,298 415,262 425,240 442,222 460,240 482,255 500,277 508,300 527,327 540,335 555,370 572,412 590,437 610,452 630,478 650,481 663,474 690,481 705,455 715,440 735,430 758,420 780,428 795,445 810,475 825,489 845,493 905,491 920,486 932,488 943,520 955,575 970,625 982,650 1000,657 1030,653 1058,650 1075,635 1090,622 1105,611 1120,628 1132,647 1145,656 1163,694 1175,689 1192,690 1203,680 1215,650 1232,618 1260,580 1290,550 1318,530 1330,505 1345,470 1365,450 1380,425 1400,390 1415,377 1430,382 1455,390 1470,400',
        'G', '80,392 95,350 120,305 135,286 147,278 165,242 182,224 203,228 212,222 232,224 245,240 262,262 280,287 292,294 310,281 325,287 340,310 355,322 372,327 383,308 393,285 412,272 432,269 445,315 460,370 480,420 500,450 520,448 535,465 550,505 570,538 595,556 607,560 617,610 627,665 635,735 645,790 654,833 672,862 690,890 702,887 722,856 735,770 745,700 755,640 770,585 780,560 790,535 798,495 808,463 818,454 828,478 837,498 850,490 865,475 878,471 893,461 905,485 920,505 942,512 952,502 963,528 972,548 982,558 990,560'
    ],
    signal: [
        'E', '148,386 170,391 190,405 210,432 250,472 270,492 305,523 335,558 358,571 380,567 410,543 440,518 470,502 503,480 518,458 530,420 548,360 565,310 590,250 610,208 630,180 655,157 680,145 703,145 730,172 755,220 770,265 790,320 812,368 830,390 850,400 865,403 905,400 950,404 975,415 1000,430 1030,460 1072,502 1110,518 1135,522 1160,512 1200,483 1240,463 1270,462 1320,470 1350,482 1395,488 1430,458 1460,440 1480,436 1520,446 1545,442 1560,443',
        'F', '0,482 35,489 65,501 90,504 150,496 180,484 215,470 260,463 300,447 350,412 385,380 405,355 430,305 450,276 470,263 500,265 525,285 555,320 580,360 610,402 640,440 670,460 695,466 715,460 750,440 775,433 800,438 820,455 850,474 890,484 940,488 960,520 985,575 1010,612 1040,632 1070,638 1110,626 1145,638 1175,663 1205,675 1230,658 1260,627 1300,582 1325,558 1350,520 1380,470 1400,445 1420,415 1440,405 1465,402',
        'G', '80,400 110,372 140,330 170,290 195,262 225,243 245,240 270,250 297,270 325,277 355,298 378,308 405,296 435,285 455,305 480,345 505,390 530,420 550,445 570,480 590,505 610,525 627,565 645,625 655,675 672,735 692,793 710,822 722,830 735,820 752,780 770,720 790,650 805,595 820,560 835,538 860,515 880,498 900,486 930,495 960,503 990,529'
    ],
    stochK: [
        'E', '148,1067 160,1067 170,1095 183,1180 195,1230 210,1240 222,1195 243,1170 255,1195 270,1230 293,1215 305,1218 318,1258 332,1235 345,1160 358,1090 370,1020 382,998 395,985 410,995 430,1030 445,1050 457,1080 468,1096 480,1080 493,1040 505,1033 517,1020 530,1017 545,990 560,1020 578,1070 600,1065 627,1046 640,1052 655,1072 667,1082 678,1120 692,1190 705,1240 715,1267 728,1264 740,1255 775,1261 800,1237 815,1205 838,1125 850,1103 863,1087 875,1045 887,1011 900,1017 912,1075 925,1112 938,1100 950,1077 963,1105 975,1170 985,1205 1010,1207 1025,1240 1037,1266 1050,1255 1072,1212 1087,1170 1110,1138 1125,1143 1137,1128 1148,1070 1170,1005 1195,1006 1208,1050 1220,1104 1245,1102 1257,1128 1270,1190 1283,1225 1300,1200 1320,1157 1330,1185 1345,1238 1357,1224 1370,1185 1395,1110 1410,1040 1420,998 1432,997 1445,1035 1457,1082 1470,1103 1482,1145 1493,1175 1507,1211 1518,1203 1530,1145 1545,1097 1555,1112',
        'F', '0,1165 10,1205 20,1180 38,1174 50,1205 57,1230 67,1241 85,1200 95,1160 105,1157 115,1125 125,1085 134,1032 145,1037 163,1036 173,1060 183,1115 192,1168 200,1130 211,1102 221,1125 230,1205 240,1239 250,1200 269,1140 279,1087 290,1110 297,1115 306,1133 316,1070 327,1027 338,1033 347,1047 360,1035 375,1000 388,1005 423,1000 433,1030 442,1053 452,1120 470,1205 485,1230 498,1262 508,1277 520,1268 538,1242 556,1258 567,1277 577,1277 592,1250 606,1236 626,1260 640,1245 653,1215 663,1170 683,1148 692,1137 702,1080 712,1025 721,1025 730,1050 740,1063 750,1058 760,1060 770,1110 780,1160 788,1225 797,1250 807,1276 818,1262 837,1213 846,1208 856,1177 875,1158 885,1167 895,1150 905,1150 915,1095 924,1063 933,1072 943,1165 952,1248 962,1277 982,1277 995,1225 1010,1173 1027,1168 1043,1182 1058,1178 1068,1110 1085,1010 1095,1022 1106,1035 1117,1120 1134,1277 1164,1277 1175,1195 1192,1080 1202,1068 1222,1008 1232,1006 1250,1021 1268,1018 1278,1010 1290,1013 1298,1008 1307,1021 1327,1015 1336,1000 1347,1020 1366,1062 1382,1035 1394,1000 1410,1015 1422,1050 1432,1108 1443,1135 1470,1230 1480,1170 1490,1080 1500,1001 1557,1001',
        'G', '175,1008 183,1012 193,1040 203,1062 213,1085 222,1115 232,1165 241,1230 260,1270 279,1270 289,1257 299,1215 308,1153 317,1145 327,1175 337,1245 346,1254 365,1217 375,1190 385,1140 394,1068 404,1043 413,1058 423,1088 432,1088 442,1150 452,1210 462,1277 475,1277 490,1260 502,1253 513,1237 529,1220 540,1245 550,1270 557,1276 568,1262 577,1228 587,1203 600,1203 608,1212 616,1235 625,1247 635,1277 654,1277 664,1250 674,1215 684,1198 694,1206 703,1200 722,1135 732,1075 742,1035 751,1000 772,1004 780,1020 797,1027 809,1013 818,1020 828,1065 837,1115 847,1128 856,1132 866,1121 875,1146 886,1140 896,1152 905,1185 914,1230 924,1266 933,1248 943,1228 952,1162 962,1180 972,1205 981,1263 990,1232'
    ],
    stochD: [
        'E', '148,1112 160,1082 170,1078 183,1110 200,1190 220,1220 240,1190 260,1188 283,1219 305,1220 332,1240 343,1220 358,1150 370,1085 382,1035 395,1000 415,998 430,1015 445,1035 455,1055 470,1080 480,1085 493,1070 515,1032 530,1022 545,1003 555,1003 567,1012 580,1045 600,1064 620,1053 640,1052 665,1062 685,1100 700,1150 715,1225 730,1260 750,1262 785,1258 803,1247 828,1200 850,1135 875,1080 888,1048 900,1025 912,1035 925,1070 937,1095 960,1095 975,1120 987,1170 1000,1198 1020,1212 1035,1235 1048,1257 1062,1252 1085,1205 1110,1155 1135,1140 1160,1085 1172,1040 1183,1015 1195,1007 1208,1022 1220,1055 1240,1098 1260,1115 1280,1175 1293,1206 1307,1206 1320,1180 1332,1180 1357,1220 1370,1215 1395,1150 1410,1095 1430,1020 1445,1011 1457,1045 1480,1110 1495,1145 1507,1185 1520,1195 1532,1180 1545,1135 1555,1118',
        'F', '0,1137 10,1170 25,1187 40,1178 55,1198 67,1225 78,1229 88,1215 98,1185 110,1162 125,1122 135,1080 145,1050 155,1036 165,1038 180,1060 192,1115 202,1133 212,1132 221,1120 230,1150 240,1195 250,1215 260,1200 270,1160 285,1115 297,1104 306,1120 316,1108 330,1055 340,1037 362,1040 375,1018 390,1004 423,1002 442,1027 452,1080 462,1130 472,1175 488,1220 500,1245 510,1267 525,1268 540,1252 558,1252 570,1268 585,1272 607,1245 625,1247 640,1252 655,1230 673,1180 693,1148 703,1115 712,1075 721,1042 731,1035 745,1052 762,1062 778,1110 788,1170 797,1220 807,1255 818,1263 828,1255 845,1222 862,1188 880,1165 900,1157 910,1135 932,1080 943,1100 952,1160 962,1225 972,1267 982,1277 993,1260 1003,1230 1020,1183 1030,1170 1045,1178 1058,1176 1072,1130 1080,1085 1088,1040 1105,1023 1115,1060 1125,1120 1134,1200 1145,1250 1155,1277 1164,1277 1174,1245 1185,1200 1193,1130 1205,1085 1222,1030 1240,1008 1265,1018 1290,1012 1325,1018 1343,1010 1355,1018 1375,1048 1384,1047 1395,1025 1410,1013 1425,1035 1443,1100 1470,1200 1480,1200 1490,1160 1500,1095 1510,1025 1520,1001 1557,1003',
        'G', '175,1003 183,1007 203,1040 222,1085 232,1120 241,1175 260,1250 279,1270 289,1265 299,1245 317,1170 327,1158 337,1195 356,1247 366,1238 384,1185 394,1125 404,1080 414,1056 423,1063 432,1077 443,1110 452,1160 462,1215 472,1255 482,1276 500,1263 520,1240 535,1227 547,1240 558,1263 568,1269 580,1245 597,1208 607,1206 625,1230 635,1253 654,1277 665,1265 684,1220 695,1206 712,1192 722,1165 732,1125 742,1075 751,1040 760,1013 770,1004 800,1024 818,1018 828,1032 842,1085 855,1125 885,1136 905,1158 914,1195 924,1230 933,1248 943,1248 952,1210 962,1190 971,1184 981,1215 990,1231'
    ]
};

// candle closes, one per 4h bar
const CLOSES = [
    363, 396, 391, 437, 457, 450, 429, 426, 439, 468, 463, 440, 475, 490, 512, 492, 477, 474, 456, 429,
    433, 445, 439, 449, 461, 466, 465, 450, 434, 450, 348, 277, 283, 323, 320, 322, 307, 304, 297, 294,
    301, 306, 294, 288, 293, 311, 356, 353, 347, 407, 421, 412, 405, 406, 378, 354, 350, 349, 356, 350,
    335, 364, 381, 369, 353, 354, 372, 402, 380, 381, 418, 431, 438, 427, 426, 428, 413, 417, 422, 427,
    421, 386, 398, 390, 387, 389, 415, 410, 393, 415, 423, 422, 438, 423, 418, 429, 444, 452, 435, 432,
    440, 422, 389, 391, 399, 415, 423, 413, 442, 451, 444, 437, 408, 408, 438, 434, 442, 437, 440, 444,
    452, 457, 451, 445, 444, 440, 443, 445, 443, 440, 445, 440, 421, 446, 442, 441, 424, 428, 449, 445,
    441, 437, 434, 433, 411, 437, 430, 412, 400, 405, 410, 405, 395, 382, 375, 376, 370, 335, 318, 305,
    319, 316, 337, 342, 332, 333, 338, 343, 359, 347, 352, 341, 353, 373, 383, 385, 376, 375, 380, 384,
    393, 386, 383, 383, 368, 384, 387, 378, 356, 348, 361, 361, 353, 356, 358, 368, 372, 378, 390, 401,
    392, 393, 388, 393, 383, 388, 389, 389, 392, 395, 388, 384, 400, 442, 476, 480, 484, 494, 473, 478,
    472, 477, 480, 488, 484, 490, 480, 479, 484, 486, 488, 516, 532, 534, 533, 561, 572, 544, 552, 563,
    550, 526, 524, 529, 531, 533, 528, 533, 528, 534, 529, 537, 527, 522, 491, 497, 502, 503, 484, 477,
    469, 476, 479, 485, 497, 485, 491, 496, 489, 444, 435, 434, 429, 420, 421, 419, 401, 384, 387, 382,
    395, 390, 372, 378, 380, 388, 383, 388, 397, 393, 386, 373, 350, 368, 374, 387, 378, 371, 374, 362,
    330, 315, 328, 327, 329, 319, 380, 390, 399, 402, 394, 386, 399, 378, 375, 397, 405, 422, 439, 431,
    422, 429, 437, 430, 504, 534, 588, 597, 607, 582, 587, 607, 611, 599, 587, 589, 523, 494, 488, 492,
    480, 510, 494, 457, 461, 487, 540, 543, 507, 502, 496, 510, 497, 503, 540, 539, 539, 529, 533, 515,
    563, 574, 565, 557
];

// bars with long shadows: [high, low]
const WICKS = {
    11: [445, 501], 23: [340, 471], 25: [265, 293], 36: [244, 299], 65: [395, 453], 68: [424, 456], 85: [419, 471],
    107: [384, 457], 114: [440, 466], 137: [396, 434], 143: [387, 433], 173: [380, 407], 180: [372, 411], 206: [395, 456],
    207: [440, 533], 219: [478, 512], 228: [532, 587], 262: [433, 492], 276: [354, 398], 299: [305, 390], 319: [526, 712],
    325: [603, 642], 326: [587, 626], 337: [444, 462], 340: [529, 568], 341: [505, 566], 346: [468, 506], 355: [564, 586]
};

const HIST = [
    -4, -5, -5.2, -13, -21, -24, -21, -18, -16, -20, -20.1, -15, -17, -20, -24, -21, -16, -9, -3, 9,
    14, 16, 17, 16, 13, 9, 7, 8, 12, 11, 28, 50, 61, 57, 53, 46, 42, 37, 32, 27,
    21, 14, 11, 8, 4, -4, -17, -24, -28, -40, -49, -51, -48, -45, -35, -23, -15, -8, -5, -2,
    4, 3, -4, -5, -2, 3, -5, -11, -9, -10, -16, -20, -24, -23, -20, -18, -12, -8, -6, -5,
    -3, 6, 9, 14, 15, 14, 9, 8, 9, 6, 3, -1, -5, -4, -3, -3.2, -6, -9, -7, -4,
    -4, 1, 10, 15, 16, 13, 9, 8, 2, -5, -7, -6, 1, 5, -2, -3, -4, -3, -4, -4.1,
    -6, -7, -6.8, -4, -3, 1, 1.5, 2, 2.5, 3, 2.8, 4, 8, 5, 4, 3.8, 6, 7, 4, 2,
    1.8, 2, 3, 3.2, 7, 5, 5, 7, 11, 12, 10, 9.8, 11, 13, 15, 15.2, 15, 20, 25, 29,
    27, 24, 17, 10, 6, 3, -1, -6, -11, -13, -15, -14, -15, -20, -24, -25, -24, -22, -21, -20,
    -20.2, -18, -15, -13, -9, -8, -7, -5, 1, 6, 6.2, 7, 7.4, 7, 6, 4, 1.5, -3, -7, -11,
    -12, -11.5, -10, -9, -7, -6, -4.5, -4, -3, -3.2, -2, 1, -2, -10, -21, -28, -31, -32, -28, -24,
    -19, -14, -11, -10, -7, -5, -2, 2, 4, 5, 6, 2, -4, -7, -8, -12, -16, -12, -9, -8,
    -4, 4, 10, 13, 15, 15.2, 16, 16.2, 16, 15.5, 15, 13, 13, 14, 20, 22, 21.5, 20, 21, 23,
    24, 23, 20, 16, 10, 8, 5, 2, 1.5, 8, 15, 18, 19, 20, 19, 18, 19, 21, 20, 19,
    14, 11, 11, 9, 6, 1, -1, -6, -10, -12, -12.1, -10, -4, -5, -6, -10, -11, -10, -9.5, -8,
    -1, 6, 8, 8.1, 6, 5.9, -7, -16, -24, -28, -28.1, -26, -25.5, -21, -17, -17.2, -18, -21, -25, -24.8,
    -22, -20, -19, -16, -26, -37, -51, -58, -61, -54, -47, -43, -38, -30, -19, -11, 9, 27, 39, 45,
    50, 46, 44, 48, 48.1, 42, 26, 14, 13, 12.9, 14, 11, 11.2, 10, 2, -4, -6, -5.8, -5.6, -2,
    -8, -14, -15, -13
];

const DATES = [
    [104, '19'], [203, '22'], [302, '25'], [402, '28'], [534, '9月'], [634, '4'], [733, '7'], [832, '10'], [932, '13'], [1031, '16'],
    [1131, '19'], [1230, '22'], [1329, '25'], [1428, '28'], [1528, '10月'], [1627, '4'], [1726, '7'], [1826, '10'], [1925, '13'],
    [2024, '16'], [2124, '19'], [2223, '22'], [2322, '25'], [2422, '28'], [2554, '11月'], [2653, '4'], [2753, '7'], [2852, '10'],
    [2952, '13'], [3051, '16'], [3150, '19'], [3250, '22']
];

function add(parent, name, attrs, text) {
    const el = document.createElementNS(NS, name);
    for (const key in attrs) el.setAttribute(key, attrs[key]);
    if (text) el.textContent = text;
    parent.appendChild(el);
    return el;
}

function points(name) {
    const parts = SERIES[name];
    const out = [];
    for (let i = 0; i < parts.length; i += 2) {
        const [ox, oy, kx, ky] = BLOCKS[parts[i]];
        parts[i + 1].split(' ').forEach(pair => {
            const [x, y] = pair.split(',').map(Number);
            out.push((ox + x / kx).toFixed(1) + ',' + (oy + y / ky).toFixed(1));
        });
    }
    return out;
}

function line(g, name, color, width) {
    add(g, 'polyline', { points: points(name).join(' '), fill: 'none', stroke: color, 'stroke-width': width || 1.2 });
}

function hline(g, y, color, extra) {
    add(g, 'line', Object.assign({ x1: LEFT, x2: 9999, y1: y, y2: y, stroke: color }, extra));
}

function drawPlot() {
    const g = add(document.getElementById('plot'), 'g', { transform: `translate(${-LEFT} ${-TOP})` });

    // grid
    for (let p = 3200; p <= 5200; p += 100) hline(g, Math.round(priceY(p)) + 0.5, COLORS.grid);
    for (let v = -200; v <= 160; v += 40) hline(g, Math.round(macdY(v)) + 0.5, COLORS.grid);
    [0, 40, 80].forEach(v => hline(g, Math.round(stochY(v)) + 0.5, COLORS.grid));
    DATES.forEach(d => add(g, 'line', { x1: d[0] + 0.5, x2: d[0] + 0.5, y1: TOP, y2: 1273, stroke: COLORS.grid }));
    hline(g, 804.5, '#30333e');
    hline(g, 1143.5, '#30333e');

    // fills
    add(g, 'polygon', { points: points('upper').concat(points('lower').reverse()).join(' '), fill: COLORS.blue, opacity: 0.07 });
    add(g, 'rect', { x: LEFT, y: 1188, width: 9999, height: 42, fill: COLORS.blue, opacity: 0.12 });

    // macd bars
    HIST.forEach((v, i) => {
        const prev = i ? HIST[i - 1] : -5;
        const color = v > 0 ? (v >= prev ? '#22ab94' : '#ace5dc') : (v < prev ? '#ff5252' : '#fccbcd');
        const x = Math.round(barX(i + FIRST) - 2.5);
        add(g, 'rect', { x, y: v > 0 ? 950 - v : 949, width: 5, height: Math.abs(v), fill: color, 'shape-rendering': 'crispEdges' });
    });

    // candles
    CLOSES.forEach((close, i) => {
        const k = i + FIRST;
        const open = i ? CLOSES[i - 1] : 355;
        const x = Math.round(barX(k));
        const top = Math.min(open, close), bottom = Math.max(open, close, top + 1);
        const wick = WICKS[k] || [top - 2 - (i * 7) % 9, bottom + 2 + (i * 5) % 8];
        const color = close <= open ? COLORS.up : COLORS.down;
        add(g, 'rect', { x, y: wick[0], width: 1, height: wick[1] - wick[0], fill: color });
        add(g, 'rect', { x: x - 1, y: top, width: 3, height: bottom - top, fill: color });
    });

    line(g, 'ma120', COLORS.teal);
    line(g, 'ma240', COLORS.magenta);
    line(g, 'ma60', COLORS.purple);
    line(g, 'ma30', COLORS.green, 1);
    line(g, 'basis', COLORS.orange, 1);
    line(g, 'upper', COLORS.blue, 1);
    line(g, 'lower', COLORS.blue, 1);
    line(g, 'ma10', COLORS.red, 1);
    line(g, 'ma5', COLORS.yellow, 1);
    line(g, 'macd', COLORS.blue, 1);
    line(g, 'signal', COLORS.orange, 1);
    line(g, 'stochK', COLORS.blue);
    line(g, 'stochD', COLORS.orange);

    // drawn support lines
    const pen = { stroke: '#f23645', 'stroke-width': 4, 'stroke-linecap': 'round' };
    add(g, 'line', Object.assign({ x1: 60, x2: 214, y1: 719, y2: 719 }, pen));
    add(g, 'line', Object.assign({ x1: 1759, x2: 2235, y1: 612, y2: 612 }, pen));
    add(g, 'line', Object.assign({ x1: 1760, x2: 1770, y1: 312, y2: 315, opacity: 0.6 }, pen));
    line(g, 'ma360', '#fff');

    // last price, bands and crosshair
    hline(g, 557.5, COLORS.up, { 'stroke-dasharray': '1 2' });
    hline(g, 1188.5, '#8a8e99', { 'stroke-dasharray': '6 5' });
    hline(g, 1230.5, '#8a8e99', { 'stroke-dasharray': '6 5' });
    hline(g, 934.5, '#b8bcc4', { 'stroke-dasharray': '6 5' });
    add(g, 'line', { x1: 1119.5, x2: 1119.5, y1: TOP, y2: 1273, stroke: '#b8bcc4', 'stroke-dasharray': '6 5' });
}

function drawAxis() {
    const g = add(document.getElementById('price-axis'), 'g', { transform: `translate(0 ${-TOP})` });
    const label = (y, text) => add(g, 'text', { x: 7, y: Math.round(y) + 4, class: 'axis-text' }, text);
    for (let p = 5200; p >= 4500; p -= 100) label(priceY(p), p + '.00');
    for (let p = 3900; p >= 3200; p -= 100) label(priceY(p), p + '.00');
    for (let v = 160; v >= -200; v -= 40) {
        if (v !== -40) label(macdY(v), (v < 0 ? '−' : '') + Math.abs(v) + '.00');
    }
    label(stochY(80), '80.00');
    label(stochY(40), '40.00');
    add(g, 'line', { x1: 0, x2: 60, y1: 804.5, y2: 804.5, stroke: '#30333e' });
    add(g, 'line', { x1: 0, x2: 60, y1: 1143.5, y2: 1143.5, stroke: '#30333e' });

    const tags = [
        [396, 56, '4346.83', '#f8f9fa', 0], [413, 56, '4308.17', '#e91eef', 1], [430, 56, '4235.97', '#0b565c', 1],
        [447, 56, '4216.74', '#2196f3', 1], [464, 56, '4144.07', '#651fff', 1], [481, 56, '4042.82', '#4caf50', 1],
        [498, 56, '4027.45', '#ff6d00', 1], [515, 56, '3960.34', '#f23645', 1], [532, 56, '3928.74', '#fbe63b', 0],
        [549, 56, '3920.17', '#2ebd85', 0], [574, 56, '3838.16', '#2196f3', 1],
        [926, 43, '17.40', '#363a45', 1], [953, 49, '−13.58', '#fccbcd', 0], [971, 49, '−35.16', '#ff6d00', 1],
        [988, 49, '−48.75', '#2196f3', 1], [1236, 43, '16.34', '#2196f3', 1], [1253, 43, '15.98', '#ff6d00', 1]
    ];
    tags.forEach(([y, width, text, fill, light]) => {
        add(g, 'rect', { x: 0, y, width, height: 17, fill });
        add(g, 'text', { x: 7, y: y + 13, fill: light ? '#fff' : '#131722', 'font-weight': light ? 600 : 400 }, text);
    });

    const t = document.getElementById('time-axis');
    DATES.forEach(([x, text]) => {
        if (x !== 1131) add(t, 'text', { x: x - LEFT, y: 17, class: 'axis-text', 'text-anchor': 'middle' }, text);
    });
    add(t, 'rect', { x: 995, y: 0, width: 118, height: 23, rx: 2, fill: '#363a45' });
    add(t, 'text', { x: 1004, y: 17, fill: '#fff', 'font-weight': 600 }, '2025-09-18');
    add(t, 'text', { x: 1074, y: 17, fill: '#fff', 'font-weight': 600 }, '16:00');
}

drawPlot();
drawAxis();
```
